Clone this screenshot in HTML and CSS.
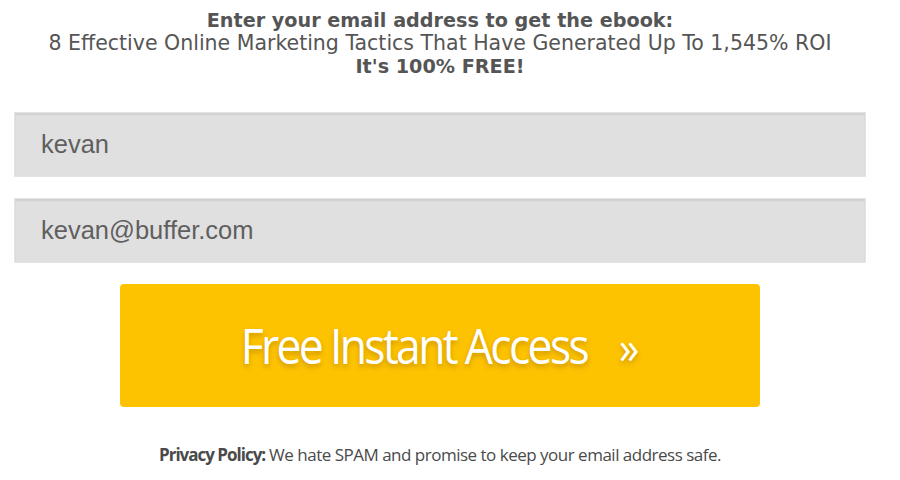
FILE: index.html
```html
<!DOCTYPE html>
<html lang="en">
<head>
    <meta charset="UTF-8">
    <meta name="viewport" content="width=device-width, initial-scale=1.0">
    <title>Get the ebook</title>
    <link rel="stylesheet" href="styles.css">
</head>
<body>

    <div class="optin">
        <div class="intro">
            <p class="strong">Enter your email address to get the ebook:</p>
            <p>8 Effective Online Marketing Tactics That Have Generated Up To 1,545% ROI</p>
            <p class="strong">It's 100% FREE!</p>
        </div>

        <form class="form" onsubmit="return false;">
            <input class="field" type="text" name="name" value="kevan">
            <input class="field" type="email" name="email" value="kevan@buffer.com">
            <button class="btn" type="submit">
                <span class="btn-text">Free Instant Access<span class="btn-arrow">&raquo;</span></span>
            </button>
        </form>

        <p class="privacy"><b>Privacy Policy:</b> We hate SPAM and promise to keep your email address safe.</p>
    </div>

</body>
</html>
```

FILE: styles.css
```css
body {
    margin: 0;
    background-color: white;
    font-family: "DejaVu Sans", Verdana, sans-serif;
}
.optin {
    width: 880px;
    padding-top: 9px;
}
.intro {
    text-align: center;
    color: #555;
    font-size: 20.5px;
    line-height: 23px;
}
.intro p {
    margin: 0;
}
.intro .strong {
    font-weight: bold;
    font-size: 19.2px;
}
.form {
    display: flex;
    flex-direction: column;
    align-items: center;
    gap: 21px;
    margin-top: 33.5px;
}
.field {
    box-sizing: border-box;
    width: 852px;
    height: 65px;
    padding: 0 26px;
    border: 1px solid #e4e4e4;
    background-color: #e0e0e0;
    box-shadow: inset 0 2px 2px rgba(0, 0, 0, 0.07);
    font-family: "Liberation Sans", Arial, sans-serif;
    font-size: 25.5px;
    color: #5f5f5f;
    outline: none;
}
.btn {
    width: 640px;
    height: 123px;
    border: none;
    border-radius: 4px;
    background-color: #fdc300;
    color: white;
    cursor: pointer;
    display: flex;
    justify-content: center;
    align-items: center;
    font-family: "Open Sans", sans-serif;
    text-shadow: 0 3px 6px rgba(150, 100, 0, 0.45);
}
.btn-text {
    display: inline-block;
    font-size: 50px;
    letter-spacing: -3px;
    transform: scaleX(0.89);
    white-space: nowrap;
}
.btn-arrow {
    font-size: 46px;
    letter-spacing: 0;
    margin-left: 36px;
}
.privacy {
    margin: 36px 0 0;
    text-align: center;
    font-family: "Open Sans", sans-serif;
    font-size: 17px;
    letter-spacing: -0.5px;
    color: #4a4a4a;
}
.privacy b {
    letter-spacing: -1px;
}
```
